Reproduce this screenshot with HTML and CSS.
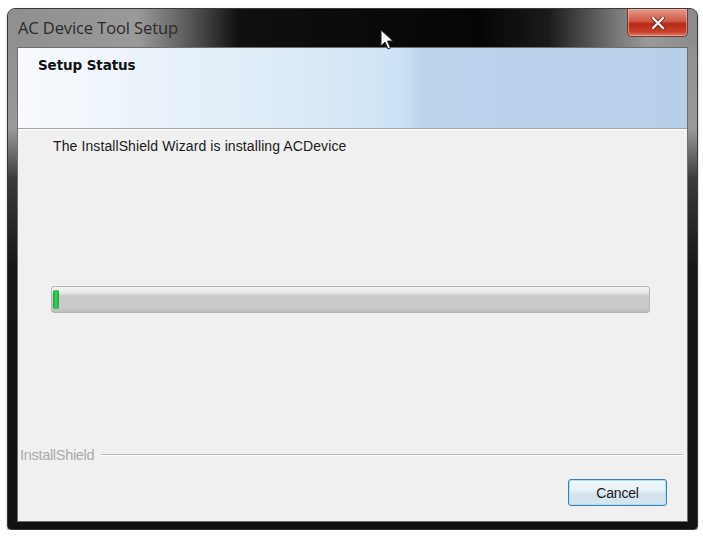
FILE: index.html
```html
<!DOCTYPE html>
<html>
<head>
<meta charset="utf-8">
<link rel="stylesheet" href="styles.css">
</head>
<body>
<div class="window">
  <div class="titlebar">
    <span class="title">AC Device Tool Setup</span>
    <button class="close" aria-label="Close">
      <svg width="14" height="12" viewBox="0 0 14 12"><path d="M2 1 L12 11 M12 1 L2 11" stroke="#6b2a22" stroke-width="4" stroke-linecap="round"/><path d="M2 1 L12 11 M12 1 L2 11" stroke="#f4eeee" stroke-width="2.4" stroke-linecap="round"/></svg>
    </button>
  </div>
  <div class="client">
    <div class="header">
      <div class="header-title">Setup Status</div>
    </div>
    <div class="content">
      <div class="status-text">The InstallShield Wizard is installing ACDevice</div>
      <div class="progress"><div class="progress-fill" style="width:6px"></div></div>
    </div>
    <div class="brand-row">
      <span class="brand">InstallShield</span>
      <span class="brand-line"></span>
    </div>
    <div class="buttons">
      <button class="btn">Cancel</button>
    </div>
  </div>
  <svg class="cursor" width="14" height="22" viewBox="0 0 14 22"><path d="M1 1 L1 17 L5 13 L8 20 L10.5 19 L7.5 12 L13 12 Z" fill="#fff" stroke="#222" stroke-width="1" stroke-linejoin="round"/></svg>
</div>
</body>
</html>
```

FILE: styles.css
```css
* { box-sizing: border-box; }
html, body { margin: 0; padding: 0; background: #fff; }
body { font-family: "Liberation Sans", Arial, sans-serif; }

.window {
  position: relative;
  margin: 8px 0 0 7px;
  width: 691px;
  height: 522px;
  border-radius: 8px 8px 4px 4px;
  background: linear-gradient(to bottom, #8c8c8c 0, #9a9a9a 120px, #3a3a3a 170px, #151515 260px, #111 100%);
  border: 1px solid #3a3a3a;
  padding: 0 9px 7px 9px;
  display: flex;
  flex-direction: column;
  box-shadow: 0 1px 2px rgba(0,0,0,0.4);
}

.titlebar {
  height: 38px;
  margin: 0 -9px;
  padding: 0 9px 0 10px;
  border-radius: 7px 7px 0 0;
  background: linear-gradient(to right, #8f8f8f 0, #9a9a9a 130px, #5a5a5a 180px, #101010 230px, #050505 470px, #1a1a1a 540px, #7a7a7a 610px, #9a9a9a 640px, #8a8a8a 100%);
  display: flex;
  align-items: center;
  justify-content: space-between;
}

.title {
  font-family: "Open Sans", "Noto Sans", sans-serif;
  font-size: 16.5px;
  color: #2a2a2a;
  margin-top: -1px;
  letter-spacing: -0.1px;
}

.close {
  align-self: flex-start;
  width: 61px;
  height: 28px;
  border: 1px solid #6d3a33;
  border-top: none;
  border-radius: 0 0 5px 5px;
  background: linear-gradient(to bottom, #e49a8a 0, #d25a45 45%, #b72a14 55%, #c8412a 85%, #e0806a 100%);
  display: flex;
  align-items: center;
  justify-content: center;
  padding: 0;
  box-shadow: inset 0 0 0 1px rgba(255,200,190,0.5);
}

.client {
  flex: 1;
  background: #f0f0f0;
  border: 1px solid #6e6e6e;
  display: flex;
  flex-direction: column;
}

.header {
  height: 81px;
  background: linear-gradient(to right, #f8fbfe 0, #ebf3fa 120px, #d9eaf7 300px, #cbe2f5 385px, #bad2ea 405px, #b7cfe9 100%);
  border-bottom: 1px solid #a3a3a3;
  box-shadow: 0 1px 0 #fff;
  padding: 9px 0 0 20px;
}

.header-title {
  font-family: "DejaVu Sans", sans-serif;
  font-weight: bold;
  font-size: 13.5px;
  color: #111;
  letter-spacing: -0.1px;
}

.content {
  flex: 1;
  padding: 9px 0 0 35px;
}

.status-text {
  font-family: "Liberation Sans", Arial, sans-serif;
  font-size: 14px;
  color: #1a1a1a;
  letter-spacing: 0.1px;
}

.progress {
  margin: 132px 0 0 -2px;
  width: 599px;
  height: 27px;
  border: 1px solid #b5b5b5;
  border-radius: 3px;
  background: linear-gradient(to bottom, #f6f6f6 0, #e4e4e4 25%, #cbcbcb 35%, #c9c9c9 80%, #bdbdbd 100%);
  padding: 3px 1px;
}

.progress-fill {
  height: 100%;
  border-radius: 2px;
  background: linear-gradient(to right, #17a43a, #3cd05e, #17a43a);
}

.brand-row {
  display: flex;
  align-items: center;
  gap: 7px;
  padding: 0 4px 0 2px;
  margin-bottom: 16px;
}

.brand {
  font-family: "Liberation Sans", Arial, sans-serif;
  font-size: 14.5px;
  color: #ababab;
  letter-spacing: -0.3px;
}

.brand-line {
  flex: 1;
  height: 2px;
  border-top: 1px solid #b8b8b8;
  border-bottom: 1px solid #fff;
}

.buttons {
  display: flex;
  justify-content: flex-end;
  padding: 0 20px 15px 0;
}

.btn {
  width: 99px;
  height: 27px;
  border: 1px solid #3c7fb1;
  border-radius: 3px;
  background: linear-gradient(to bottom, #f4f9fc 0, #e5f0f7 45%, #d3e3ee 55%, #d6e4ee 100%);
  box-shadow: inset 0 0 0 1px #a3e4f8;
  font-family: "Liberation Sans", Arial, sans-serif;
  font-size: 14px;
  color: #1a1a1a;
  letter-spacing: -0.2px;
  padding: 0;
}

.cursor {
  position: absolute;
  left: 372px;
  top: 20px;
}
```
